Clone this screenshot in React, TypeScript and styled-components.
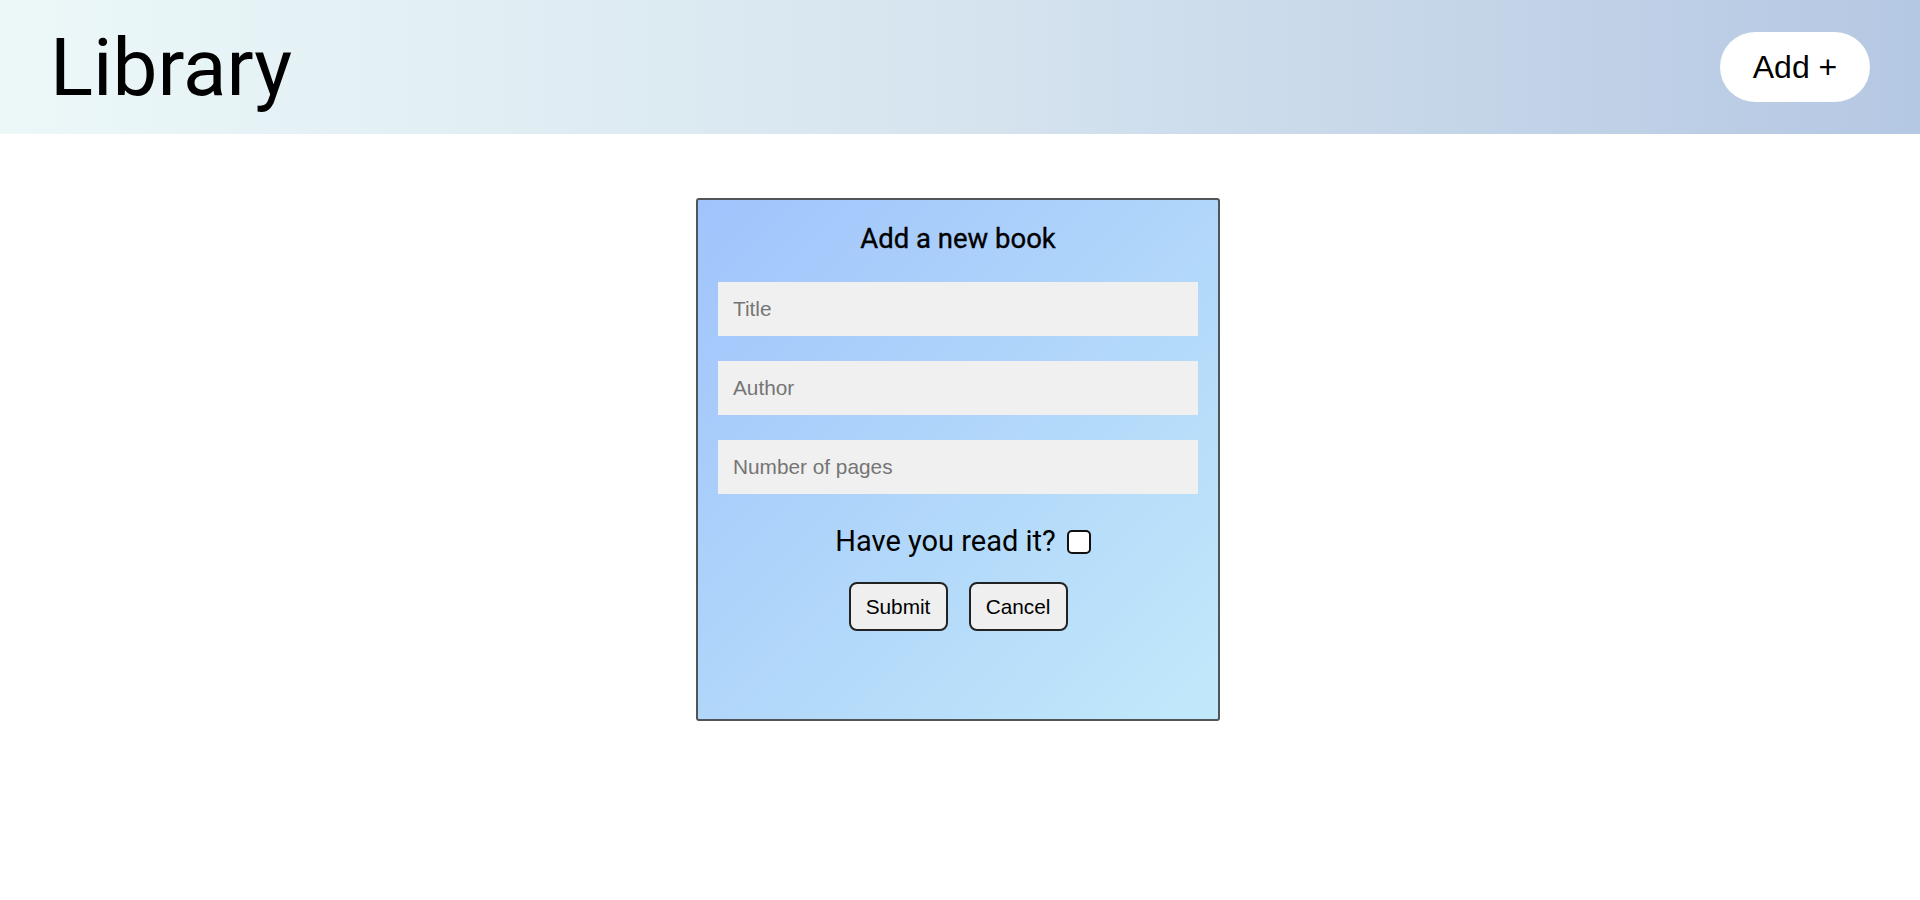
import React from "react";
import styled, { createGlobalStyle } from "styled-components";

const GlobalStyle = createGlobalStyle`
  html, body { margin: 0; padding: 0; background: #ffffff; }
  body { font-family: Roboto, "Noto Sans", sans-serif; color: #000; }
  * { box-sizing: border-box; }
`;

const Header = styled.header`
  height: 134px;
  display: flex;
  align-items: center;
  justify-content: space-between;
  padding: 0 50px 0 50px;
  background: linear-gradient(90deg, #ecf8f8 0%, #d6e4ef 50%, #b5c8e3 100%);
`;

const Logo = styled.h1`
  margin: 0;
  font-family: Roboto, sans-serif;
  font-weight: 400;
  font-size: 80px;
  line-height: 1;
  margin-top: 2px;
`;

const AddButton = styled.button`
  width: 150px;
  height: 70px;
  border: none;
  border-radius: 35px;
  background: #ffffff;
  font-family: "Liberation Sans", Arial, sans-serif;
  font-size: 32px;
  color: #000;
  cursor: pointer;
`;

const Main = styled.main`
  display: flex;
  justify-content: center;
  padding-top: 64px;
  padding-right: 4px;
`;

const Modal = styled.form`
  width: 524px;
  height: 523px;
  border: 2px solid #525558;
  border-radius: 3px;
  background: linear-gradient(135deg, #a0c4fc 0%, #b2d8fa 55%, #c2e9fa 100%);
  padding: 23px 20px 20px;
  display: flex;
  flex-direction: column;
  align-items: stretch;
`;

const Heading = styled.h2`
  margin: 0 0 27px;
  text-align: center;
  font-family: Roboto, sans-serif;
  font-weight: 400;
  font-size: 27.5px;
  line-height: 32px;
  -webkit-text-stroke: 0.35px #000;
`;

const Field = styled.input`
  height: 54px;
  border: none;
  outline: none;
  background: #f0f0f0;
  padding: 0 15px;
  margin: 0 0 25px;
  font-family: "Liberation Sans", Arial, sans-serif;
  font-size: 20.8px;
  color: #000;
  &::placeholder { color: #757575; }
  &:last-of-type { margin-bottom: 0; }
`;

const ReadRow = styled.label`
  margin-top: 28px;
  padding-left: 10px;
  display: flex;
  justify-content: center;
  align-items: center;
  gap: 11px;
  font-family: Roboto, sans-serif;
  font-size: 29px;
  line-height: 38px;
`;

const Check = styled.input`
  appearance: none;
  width: 24px;
  height: 24px;
  margin: 0;
  border: 2px solid #111;
  border-radius: 5px;
  background: #fff;
  position: relative;
  top: 1px;
`;

const ButtonRow = styled.div`
  margin-top: 22px;
  display: flex;
  justify-content: center;
  gap: 21px;
`;

const FormButton = styled.button`
  width: 99px;
  height: 49px;
  border: 2px solid #222;
  border-radius: 8px;
  background: #efefef;
  font-family: "Liberation Sans", Arial, sans-serif;
  font-size: 20.8px;
  color: #000;
  padding: 0;
`;

export default function App() {
  return (
    <>
      <GlobalStyle />
      <Header>
        <Logo>Library</Logo>
        <AddButton type="button">Add +</AddButton>
      </Header>
      <Main>
        <Modal onSubmit={(e) => e.preventDefault()}>
          <Heading>Add a new book</Heading>
          <Field type="text" placeholder="Title" />
          <Field type="text" placeholder="Author" />
          <Field type="number" placeholder="Number of pages" />
          <ReadRow>
            Have you read it? <Check type="checkbox" />
          </ReadRow>
          <ButtonRow>
            <FormButton type="submit">Submit</FormButton>
            <FormButton type="button">Cancel</FormButton>
          </ButtonRow>
        </Modal>
      </Main>
    </>
  );
}
